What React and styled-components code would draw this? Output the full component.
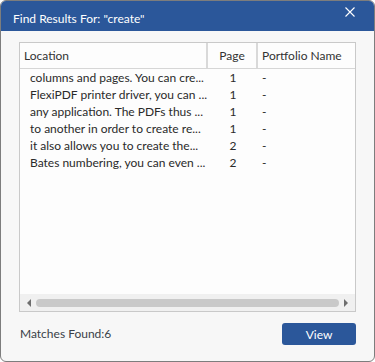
import React from "react";
import styled, { createGlobalStyle } from "styled-components";

const GlobalStyle = createGlobalStyle`
  html, body {
    margin: 0;
    padding: 0;
    background: #ffffff;
  }
  * {
    box-sizing: border-box;
  }
`;

const Window = styled.div`
  width: 375px;
  height: 362px;
  border: 1px solid #7d7d7d;
  border-radius: 6px;
  overflow: hidden;
  background: #f7f7f7;
  display: flex;
  flex-direction: column;
  font-family: Lato, "Noto Sans", sans-serif;
  font-size: 12px;
`;

const TitleBar = styled.div`
  height: 30px;
  flex-shrink: 0;
  background: #2b579a;
  color: #ffffff;
  display: flex;
  align-items: center;
  justify-content: space-between;
  padding: 5px 19px 0 12px;
  font-size: 12px;
`;

const CloseButton = styled.button`
  border: none;
  background: transparent;
  padding: 0;
  margin-top: -14px;
  width: 10px;
  height: 10px;
  display: flex;
  cursor: pointer;
`;

const Body = styled.div`
  flex: 1;
  display: flex;
  flex-direction: column;
  padding: 11px 18px 0 18px;
`;

const ResultBox = styled.div`
  height: 270px;
  border: 1px solid #c9c9c9;
  background: #fdfdfd;
  display: flex;
  flex-direction: column;
`;

const Columns = "188px 50px 1fr";

const HeaderRow = styled.div`
  display: grid;
  grid-template-columns: ${Columns};
  height: 26px;
  border-bottom: 1px solid #d6d6d6;
  color: #333333;
`;

const HeaderCell = styled.div`
  display: flex;
  align-items: center;
  padding: 0 ${p => (p.$center ? 0 : 4)}px;
  justify-content: ${p => (p.$center ? "center" : "flex-start")};
  border-right: ${p => (p.$last ? "none" : "2px solid #d9d9d9")};
`;

const Rows = styled.div`
  flex: 1;
`;

const Row = styled.div`
  display: grid;
  grid-template-columns: ${Columns};
  height: 17px;
  align-items: center;
  color: #2a2a2a;
`;

const Cell = styled.div`
  white-space: nowrap;
  overflow: hidden;
  padding-left: ${p => p.$pad || 0}px;
  text-align: ${p => (p.$center ? "center" : "left")};
`;

const ScrollBar = styled.div`
  height: 17px;
  background: #f0f0f0;
  display: flex;
  align-items: center;
  padding: 0 6px;
  gap: 5px;
`;

const Thumb = styled.div`
  flex: 1;
  height: 8px;
  border-radius: 4px;
  background: #c9c9c9;
`;

const Arrow = styled.div`
  width: 0;
  height: 0;
  border-top: 4px solid transparent;
  border-bottom: 4px solid transparent;
  ${p =>
    p.$dir === "left"
      ? "border-right: 4px solid #6e6e6e; margin-left: 1px;"
      : "border-left: 4px solid #6e6e6e; margin-right: 1px;"}
`;

const Footer = styled.div`
  display: flex;
  align-items: center;
  justify-content: space-between;
  margin-top: 11px;
  padding-left: 1px;
`;

const Matches = styled.span`
  color: #3a3f47;
  margin-top: -2px;
`;

const ViewButton = styled.button`
  width: 74px;
  height: 22px;
  border: none;
  border-radius: 3px;
  background: #2b579a;
  color: #ffffff;
  font-family: inherit;
  font-size: 12px;
  cursor: pointer;
`;

const results = [
  { text: "columns and pages. You can cre...", page: 1 },
  { text: "FlexiPDF printer driver, you can ...", page: 1 },
  { text: "any application. The PDFs thus ...", page: 1 },
  { text: "to another in order to create re...", page: 1 },
  { text: "it also allows you to create the...", page: 2 },
  { text: "Bates numbering, you can even ...", page: 2 }
];

export default function App() {
  return (
    <>
      <GlobalStyle />
      <Window>
        <TitleBar>
          <span>Find Results For: "create"</span>
          <CloseButton aria-label="Close">
            <svg width="10" height="10" viewBox="0 0 10 10">
              <path d="M0.5 0.5 L9.5 9.5 M9.5 0.5 L0.5 9.5" stroke="#ffffff" strokeWidth="1.1" />
            </svg>
          </CloseButton>
        </TitleBar>
        <Body>
          <ResultBox>
            <HeaderRow>
              <HeaderCell>Location</HeaderCell>
              <HeaderCell $center>Page</HeaderCell>
              <HeaderCell $last>Portfolio Name</HeaderCell>
            </HeaderRow>
            <Rows>
              {results.map((r, i) => (
                <Row key={i}>
                  <Cell $pad={10}>{r.text}</Cell>
                  <Cell $center>{r.page}</Cell>
                  <Cell $pad={4}>-</Cell>
                </Row>
              ))}
            </Rows>
            <ScrollBar>
              <Arrow $dir="left" />
              <Thumb />
              <Arrow $dir="right" />
            </ScrollBar>
          </ResultBox>
          <Footer>
            <Matches>Matches Found:6</Matches>
            <ViewButton>View</ViewButton>
          </Footer>
        </Body>
      </Window>
    </>
  );
}
